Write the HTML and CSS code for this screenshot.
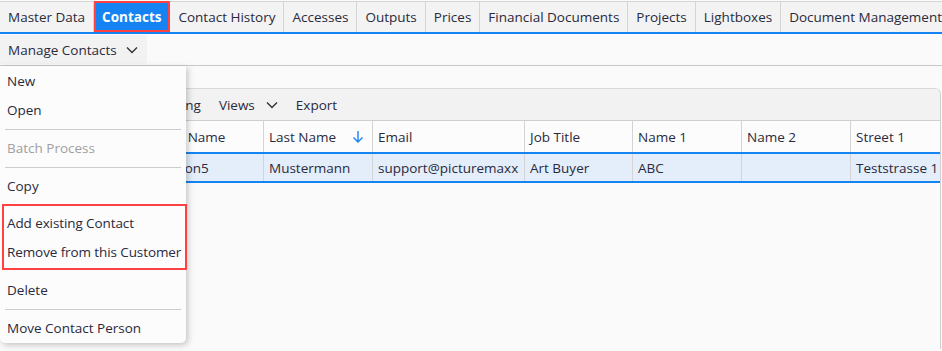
FILE: index.html
```html
<!DOCTYPE html>
<html lang="en">
<head>
    <meta charset="UTF-8">
    <title>Contacts</title>
    <link rel="stylesheet" href="styles.css">
</head>
<body>
    <div class="tabs">
        <div class="tab">Master Data</div>
        <div class="tab active">Contacts</div>
        <div class="tab">Contact History</div>
        <div class="tab">Accesses</div>
        <div class="tab">Outputs</div>
        <div class="tab">Prices</div>
        <div class="tab">Financial Documents</div>
        <div class="tab">Projects</div>
        <div class="tab">Lightboxes</div>
        <div class="tab">Document Management</div>
    </div>

    <div class="subbar">
        <div class="manage">Manage Contacts
            <svg class="chev" width="12" height="8" viewBox="0 0 12 8"><polyline points="1,1.5 6,6.5 11,1.5" fill="none" stroke="#333" stroke-width="1.4"/></svg>
        </div>
    </div>

    <div class="content">
        <div class="panel">
            <div class="toolbar">
                <span class="tool">Sorting</span>
                <span class="tool">Views
                    <svg class="chev" width="12" height="8" viewBox="0 0 12 8"><polyline points="1,1.5 6,6.5 11,1.5" fill="none" stroke="#333" stroke-width="1.4"/></svg>
                </span>
                <span class="tool">Export</span>
            </div>
            <div class="grid head">
                <div class="cell"></div>
                <div class="cell">First Name</div>
                <div class="cell sort">Last Name
                    <svg width="12" height="14" viewBox="0 0 12 14"><path d="M6 1v11M1.5 7.5L6 12l4.5-4.5" fill="none" stroke="#1a84f0" stroke-width="1.4"/></svg>
                </div>
                <div class="cell">Email</div>
                <div class="cell">Job Title</div>
                <div class="cell">Name 1</div>
                <div class="cell">Name 2</div>
                <div class="cell">Street 1</div>
            </div>
            <div class="grid row selected">
                <div class="cell"></div>
                <div class="cell">Person5</div>
                <div class="cell">Mustermann</div>
                <div class="cell"><span class="clip">support@picturemaxx.com</span></div>
                <div class="cell">Art Buyer</div>
                <div class="cell">ABC</div>
                <div class="cell"></div>
                <div class="cell">Teststrasse 1</div>
            </div>
        </div>
    </div>

    <div class="menu">
        <div class="item">New</div>
        <div class="item">Open</div>
        <div class="sep"></div>
        <div class="item disabled">Batch Process</div>
        <div class="sep"></div>
        <div class="item">Copy</div>
        <div class="group">
            <div class="item">Add existing Contact</div>
            <div class="item">Remove from this Customer</div>
        </div>
        <div class="item">Delete</div>
        <div class="sep"></div>
        <div class="item">Move Contact Person</div>
    </div>
</body>
</html>
```

FILE: styles.css
```css
body {
    margin: 0;
    font-family: "Open Sans", Arial, sans-serif;
    font-size: 13.5px;
    color: #2a2a3c;
    background: #fafafa;
    overflow: hidden;
    height: 351px;
}
.tabs {
    display: flex;
    height: 30px;
    margin-top: 1px;
    border-top: 1px solid #d4d4d4;
    border-bottom: 2px solid #1584f2;
    background: #f3f3f3;
    white-space: nowrap;
}
.tab {
    padding: 0 8px;
    display: flex;
    align-items: center;
    border-right: 1px solid #d4d4d4;
}
.tab.active {
    background: #1584f2;
    color: #fff;
    font-weight: bold;
    outline: 2px solid #ff4141;
    outline-offset: -2px;
    margin-top: -1px;
}
.subbar {
    height: 30px;
    padding-top: 1px;
    border-bottom: 1px solid #c8c8c8;
}
.manage {
    display: inline-flex;
    align-items: center;
    gap: 9px;
    height: 29px;
    padding: 0 9px 0 8px;
    background: #f2f2f2;
    border-radius: 0 0 4px 0;
}
.chev {
    margin-top: 1px;
}
.content {
    padding-top: 22px;
}
.panel {
    margin-right: 1px;
    border-top: 1px solid #d8d8d8;
    border-right: 1px solid #d0d0d0;
    border-radius: 0 6px 0 0;
    height: 260px;
}
.toolbar {
    display: flex;
    align-items: center;
    height: 31px;
    padding-left: 156px;
    background: #f2f2f2;
    border-radius: 0 6px 0 0;
    border-bottom: 1px solid #d0d0d0;
}
.tool {
    display: inline-flex;
    align-items: center;
    gap: 11px;
    margin-right: 18px;
}
.grid {
    display: grid;
    grid-template-columns: 152px 112px 109px 152px 108px 109px 109px 90px;
    white-space: nowrap;
}
.head {
    height: 31px;
    background: #fcfcfc;
}
.cell {
    display: flex;
    align-items: center;
    padding: 0 5px;
    overflow: hidden;
    border-right: 1px solid #d4d4d4;
}
.cell:last-child {
    border-right: none;
}
.clip {
    overflow: hidden;
}
.sort {
    justify-content: space-between;
    padding-right: 8px;
}
.row {
    height: 27px;
    border-top: 2px solid #1584f2;
    border-bottom: 2px solid #1584f2;
}
.selected {
    background: #e3eefa;
}
.menu {
    position: absolute;
    left: 0;
    top: 66px;
    width: 186px;
    padding-top: 1px;
    background: #fcfcfc;
    border-radius: 0 0 5px 5px;
    box-shadow: 2px 2px 6px rgba(0, 0, 0, 0.22);
}
.item {
    height: 29px;
    line-height: 29px;
    padding: 0 7px;
    white-space: nowrap;
}
.item.disabled {
    color: #a0a0a0;
}
.sep {
    height: 1px;
    margin: 4px 5px;
    background: #cccccc;
}
.group {
    margin: 3px -1px 6px 2px;
    padding: 3px 0 1px;
    border: 2px solid #ff4141;
}
.group .item {
    padding-left: 3px;
    letter-spacing: -0.1px;
}
```
